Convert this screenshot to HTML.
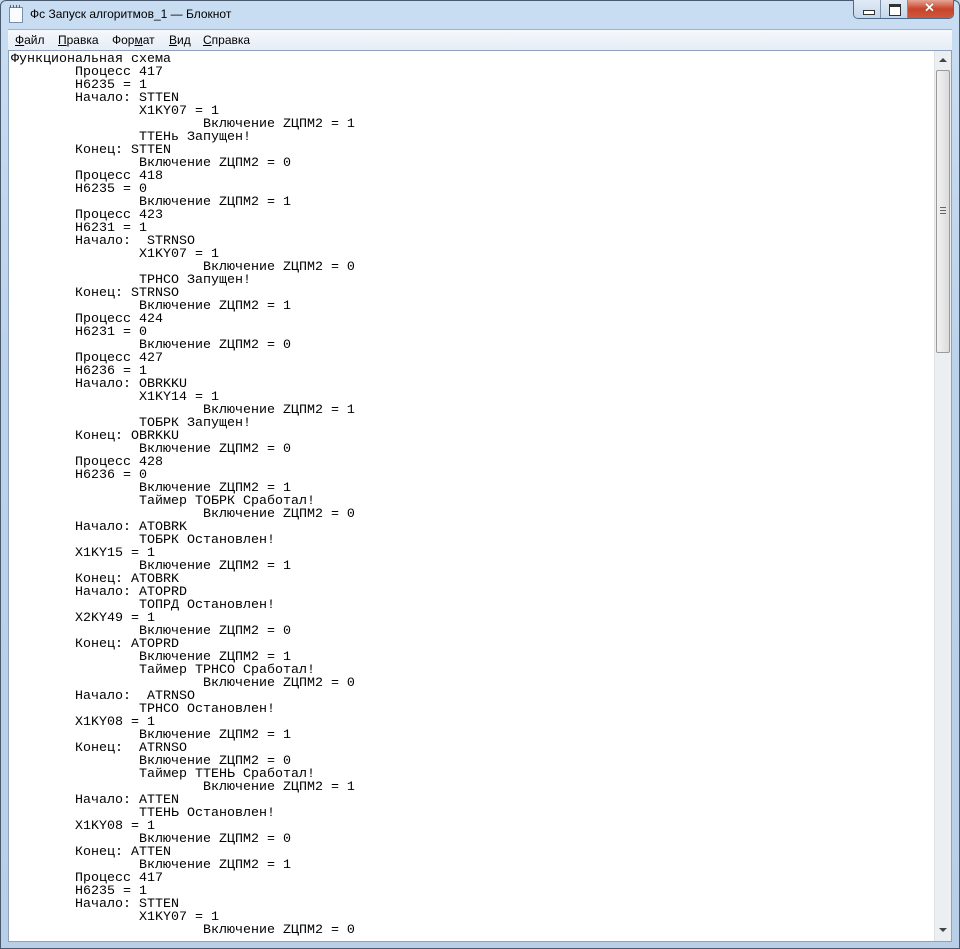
<!DOCTYPE html><html><head><meta charset="utf-8"><style>
*{margin:0;padding:0;box-sizing:border-box}
body{width:960px;height:949px;overflow:hidden;background:#c4d8ee;font-family:"Liberation Sans",sans-serif;position:relative}
.frame{position:absolute;left:0;top:0;width:960px;height:949px;background:linear-gradient(#c9ddf2,#bcd2ea 40%,#b9cfe8);border:1px solid #4a5a6e;border-radius:6px 6px 0 0}
.title{position:absolute;left:30px;top:7px;font-size:12px;color:#000}
.ico{position:absolute;left:9px;top:7px;width:14px;height:16px;background:#f8fbff;border:1px solid #7a8ea8}
.ico:before{content:"";position:absolute;left:0;top:-3px;width:12px;height:3px;background:repeating-linear-gradient(90deg,#567 0 1px,transparent 1px 3px)}
.btns{position:absolute;right:6px;top:0;height:19px;display:flex;border:1px solid #4e6a8a;border-top:none;border-radius:0 0 5px 5px;overflow:hidden}
.btns div{height:18px;position:relative}
.b1,.b2{width:27px;background:linear-gradient(#e1ebf6,#c5d6ea);border-right:1px solid #7a8ea8}
.b3{width:45px;background:linear-gradient(#e7a597,#c8442a 50%,#d0583d)}
.b1:after{content:"";position:absolute;left:9px;top:10px;width:10px;height:3px;background:#fff;border:1px solid #333}
.b2:after{content:"";position:absolute;left:8px;top:4px;width:10px;height:8px;border:1px solid #333;border-top-width:3px;background:#fff}
.b3:after{content:"✕";position:absolute;left:16px;top:0;color:#fff;font-weight:bold;font-size:13px;text-shadow:0 0 1px #333}
.menu{position:absolute;left:8px;top:29px;width:944px;height:21px;background:linear-gradient(#f5f8fc,#e6edf6);border-top:1px solid #9fb4cc;font-size:12px}
.menu span{position:absolute;top:3px}
.menu u{text-decoration:underline}
.edit{position:absolute;left:8px;top:50px;width:944px;height:892px;background:#fff;border:1px solid #8da2bb;overflow:hidden}
pre{position:absolute;left:2px;top:2px;font-family:"Liberation Mono",monospace;font-size:13.33px;line-height:13px;tab-size:8;color:#000}
.sb{position:absolute;right:0;top:0;width:17px;height:890px;background:#eceff2;border-left:1px solid #e0e3e6}
.th{position:absolute;left:1px;top:19px;width:14px;height:283px;background:linear-gradient(90deg,#f2f2f2,#dcdcdc);border:1px solid #9a9a9a;border-radius:2px}
.th:after{content:"";position:absolute;left:3px;top:136px;width:6px;height:7px;background:repeating-linear-gradient(#666 0 1px,transparent 1px 3px)}
.ar{position:absolute;left:4px;width:0;height:0;border-left:4px solid transparent;border-right:4px solid transparent}
</style></head><body>
<div class="frame"></div>
<div class="ico"></div>
<div class="title">Фс Запуск алгоритмов_1 — Блокнот</div>
<div class="btns"><div class="b1"></div><div class="b2"></div><div class="b3"></div></div>
<div class="menu"><span style="left:7px"><u>Ф</u>айл</span><span style="left:50px"><u>П</u>равка</span><span style="left:104px">Фор<u>м</u>ат</span><span style="left:161px"><u>В</u>ид</span><span style="left:195px"><u>С</u>правка</span></div>
<div class="edit"><pre>Функциональная схема
	Процесс 417
	Н6235 = 1
	Начало: STTEN
		X1KY07 = 1
			Включение ZЦПМ2 = 1
		ТТЕНь Запущен!
	Конец: STTEN
		Включение ZЦПМ2 = 0
	Процесс 418
	Н6235 = 0
		Включение ZЦПМ2 = 1
	Процесс 423
	Н6231 = 1
	Начало:  STRNSO
		X1KY07 = 1
			Включение ZЦПМ2 = 0
		ТРНСО Запущен!
	Конец: STRNSO
		Включение ZЦПМ2 = 1
	Процесс 424
	Н6231 = 0
		Включение ZЦПМ2 = 0
	Процесс 427
	Н6236 = 1
	Начало: OBRKKU
		X1KY14 = 1
			Включение ZЦПМ2 = 1
		ТОБРК Запущен!
	Конец: OBRKKU
		Включение ZЦПМ2 = 0
	Процесс 428
	Н6236 = 0
		Включение ZЦПМ2 = 1
		Таймер ТОБРК Сработал!
			Включение ZЦПМ2 = 0
	Начало: ATOBRK
		ТОБРК Остановлен!
	X1KY15 = 1
		Включение ZЦПМ2 = 1
	Конец: ATOBRK
	Начало: ATOPRD
		ТОПРД Остановлен!
	X2KY49 = 1
		Включение ZЦПМ2 = 0
	Конец: ATOPRD
		Включение ZЦПМ2 = 1
		Таймер ТРНСО Сработал!
			Включение ZЦПМ2 = 0
	Начало:  ATRNSO
		ТРНСО Остановлен!
	X1KY08 = 1
		Включение ZЦПМ2 = 1
	Конец:  ATRNSO
		Включение ZЦПМ2 = 0
		Таймер ТТЕНЬ Сработал!
			Включение ZЦПМ2 = 1
	Начало: ATTEN
		ТТЕНЬ Остановлен!
	X1KY08 = 1
		Включение ZЦПМ2 = 0
	Конец: ATTEN
		Включение ZЦПМ2 = 1
	Процесс 417
	Н6235 = 1
	Начало: STTEN
		X1KY07 = 1
			Включение ZЦПМ2 = 0</pre>
<div class="sb"><div class="ar" style="top:7px;border-bottom:4px solid #444"></div><div class="th"></div><div class="ar" style="top:877px;border-top:4px solid #444"></div></div>
</div>
</body></html>
